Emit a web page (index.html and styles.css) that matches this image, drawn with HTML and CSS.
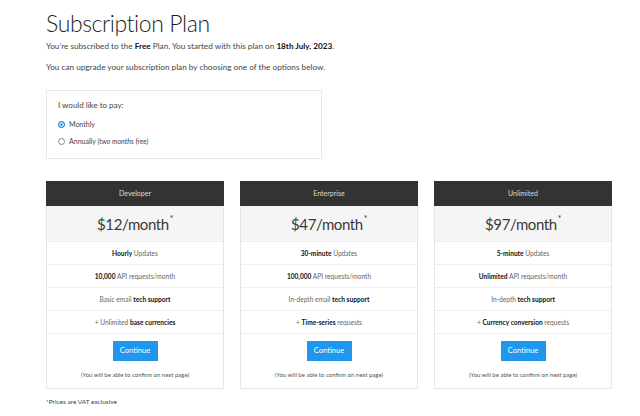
FILE: index.html
```html
<!DOCTYPE html>
<html>
<head>
<meta charset="utf-8">
<link rel="stylesheet" href="styles.css">
</head>
<body>
<div class="page">
  <h1 class="title">Subscription Plan</h1>
  <p class="lead">You’re subscribed to the <b>Free</b> Plan. You started with this plan on <b>18th July, 2023</b>.</p>
  <p class="lead">You can upgrade your subscription plan by choosing one of the options below.</p>

  <div class="paybox">
    <div class="paylabel">I would like to pay:</div>
    <label class="opt"><span class="radio checked"></span>Monthly</label>
    <label class="opt"><span class="radio"></span><span>Annually <i>(two months free)</i></span></label>
  </div>

  <div class="plans">
    <div class="card">
      <div class="head">Developer</div>
      <div class="price">$12/month<sup>*</sup></div>
      <div class="row"><b>Hourly</b> Updates</div>
      <div class="row"><b>10,000</b> API requests/month</div>
      <div class="row">Basic email <b>tech support</b></div>
      <div class="row">+ Unlimited <b>base currencies</b></div>
      <div class="action">
        <span class="btn">Continue</span>
        <span class="note">(You will be able to confirm on next page)</span>
      </div>
    </div>
    <div class="card">
      <div class="head">Enterprise</div>
      <div class="price">$47/month<sup>*</sup></div>
      <div class="row"><b>30-minute</b> Updates</div>
      <div class="row"><b>100,000</b> API requests/month</div>
      <div class="row">In-depth email <b>tech support</b></div>
      <div class="row">+ <b>Time-series</b> requests</div>
      <div class="action">
        <span class="btn">Continue</span>
        <span class="note">(You will be able to confirm on next page)</span>
      </div>
    </div>
    <div class="card">
      <div class="head">Unlimited</div>
      <div class="price">$97/month<sup>*</sup></div>
      <div class="row"><b>5-minute</b> Updates</div>
      <div class="row"><b>Unlimited</b> API requests/month</div>
      <div class="row">In-depth <b>tech support</b></div>
      <div class="row">+ <b>Currency conversion</b> requests</div>
      <div class="action">
        <span class="btn">Continue</span>
        <span class="note">(You will be able to confirm on next page)</span>
      </div>
    </div>
  </div>

  <p class="foot">*Prices are VAT exclusive</p>
</div>
</body>
</html>
```

FILE: styles.css
```css
* { box-sizing: border-box; }
html, body { margin: 0; padding: 0; background: #fff; }
body {
  font-family: Lato, "Open Sans", "Liberation Sans", sans-serif;
  color: #333;
}
.page {
  width: 566px;
  margin-left: 46px;
  padding-top: 8px;
}
.title {
  margin: 0;
  font-size: 23px;
  font-weight: 300;
  line-height: 30px;
  color: #1e1e1e;
  letter-spacing: -0.4px;
}
.lead {
  margin: 2px 0 0 0;
  font-size: 8.2px;
  line-height: 12px;
  color: #444;
}
.lead + .lead { margin-top: 9px; }
.lead b { color: #111; font-weight: 700; }
.paybox {
  width: 276px;
  margin-top: 17px;
  border: 1px solid #e8e8e8;
  padding: 8px 11px 5px;
  display: flex;
  flex-direction: column;
}
.paylabel {
  font-size: 8px;
  line-height: 12px;
  color: #444;
  margin-bottom: 8px;
}
.opt {
  display: flex;
  align-items: center;
  gap: 4px;
  font-size: 7px;
  line-height: 10px;
  color: #444;
  margin-bottom: 7px;
}
.opt i { font-style: italic; }
.radio {
  width: 7px;
  height: 7px;
  border-radius: 50%;
  border: 1px solid #888;
  background: #fff;
}
.radio.checked {
  border-color: #1a73e8;
  background: #1a73e8;
  box-shadow: inset 0 0 0 1.3px #fff;
}
.plans {
  margin-top: 22px;
  display: grid;
  grid-template-columns: repeat(3, 178px);
  gap: 16px;
}
.card {
  border: 1px solid #e6e6e6;
  border-top: none;
  display: flex;
  flex-direction: column;
  text-align: center;
}
.head {
  background: #333;
  color: #ddd;
  font-size: 7px;
  height: 25px;
  line-height: 25px;
  margin: 0 -1px;
}
.price {
  background: #f5f5f5;
  height: 35px;
  line-height: 37px;
  font-size: 15px;
  font-weight: 400;
  letter-spacing: -0.4px;
  color: #3a3a3a;
}
.price sup {
  font-size: 8.5px;
  font-weight: 400;
  vertical-align: baseline;
  position: relative;
  top: -8.5px;
  margin-left: 1px;
}
.row {
  height: 23px;
  line-height: 23px;
  font-size: 6.6px;
  color: #666;
  border-top: 1px solid #eee;
}
.row b { color: #111; font-weight: 700; }
.action {
  border-top: 1px solid #eee;
  display: flex;
  flex-direction: column;
  align-items: center;
  padding: 7px 0 9px;
}
.btn {
  width: 45px;
  height: 20px;
  line-height: 20px;
  background: #2196ed;
  color: #fff;
  font-size: 7.5px;
}
.note {
  margin-top: 9px;
  font-size: 6px;
  line-height: 9px;
  color: #555;
}
.foot {
  margin: 9px 0 0;
  font-size: 6.5px;
  color: #444;
}
```
